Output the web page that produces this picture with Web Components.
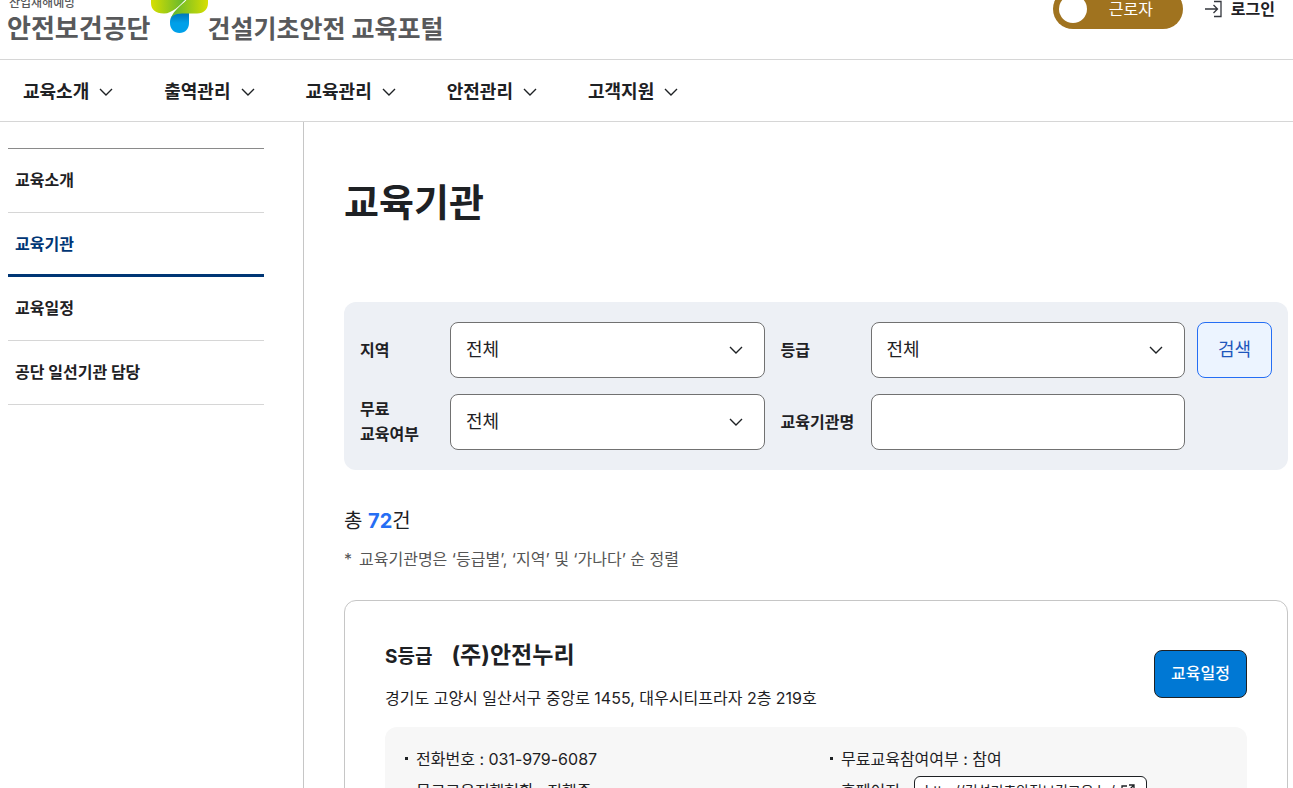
<!DOCTYPE html>
<html lang="ko">
<head>
<meta charset="UTF-8">
<title>교육기관 | 건설기초안전 교육포털</title>
<style>
    body {
        margin: 0;
        height: 100vh;
        overflow: hidden;
        background: #fff;
        color: #1e2124;
        font-family: Inter, "Noto Sans CJK KR", sans-serif;
        font-size: 16px;
        line-height: 24px;
    }
</style>
</head>
<body>
<portal-app></portal-app>

<script>
const chevron = `
    <svg class="chevron" width="16" height="16" viewBox="0 0 16 16" fill="none" stroke="currentColor" stroke-width="1.4" aria-hidden="true">
        <path d="M2 5l6 6 6-6"/>
    </svg>`;

class PortalHeader extends HTMLElement {
    constructor() {
        super();
        this.attachShadow({ mode: 'open' });
    }

    connectedCallback() {
        this.shadowRoot.innerHTML = `
            <style>
                :host { display: block; border-bottom: 1px solid #d6d6d6; }
                header {
                    display: flex;
                    justify-content: space-between;
                    align-items: flex-end;
                    height: 59px;
                    overflow: hidden;
                    padding: 0 18px 0 7px;
                }
                .brand { display: flex; align-items: flex-end; color: #58595b; text-decoration: none; font-weight: 700; }
                .agency, .title { padding-bottom: 12px; line-height: 36px; }
                .agency { font-size: 26px; }
                .agency small { display: block; padding-left: 2px; font-size: 12px; line-height: 16px; font-weight: 500; }
                .title { font-size: 25px; }
                .symbol { margin-bottom: 26px; }
                .util { display: flex; align-items: center; gap: 22px; padding-bottom: 30px; }
                .switch {
                    display: flex;
                    align-items: center;
                    width: 130px;
                    height: 40px;
                    padding: 0 8px 0 6px;
                    border: 0;
                    border-radius: 20px;
                    background: #a0731f;
                    color: #fff;
                    font: inherit;
                }
                .switch i { width: 28px; height: 28px; border-radius: 50%; background: #fff; }
                .switch span { flex: 1; text-align: center; }
                .login { display: flex; align-items: center; gap: 9px; color: inherit; text-decoration: none; font-weight: 700; }
            </style>
            <header>
                <a class="brand" href="#">
                    <span class="agency"><small>산업재해예방</small>안전보건공단</span>
                    <svg class="symbol" width="57" height="66" viewBox="0 0 57 66" aria-hidden="true">
                        <defs>
                            <linearGradient id="l"><stop offset="0" stop-color="#d7df00"/><stop offset="1" stop-color="#5cb531"/></linearGradient>
                            <linearGradient id="r"><stop offset="0" stop-color="#5cb531"/><stop offset="1" stop-color="#d7df00"/></linearGradient>
                            <linearGradient id="b" x2="0" y2="1"><stop offset="0" stop-color="#0075b8"/><stop offset=".5" stop-color="#00a0e9"/></linearGradient>
                        </defs>
                        <path fill="url(#l)" d="M10 22h25v10C30 37 22 46.500 13 46.500C4 46.500 0 42 0 36V32C0 26 4 22 10 22z"/>
                        <path fill="url(#b)" d="M19 55C19 49 23 46 29 46H38V56C38 62 34 66 28.500 66C23 66 19 62 19 56z"/>
                        <path fill="url(#r)" d="M37 31C33 37 23 42 20 51C23 47 27 46.500 33 46.500H46C53 46.500 57 42 57 36V32C57 26 53 22 47 22H37z"/>
                    </svg>
                    <span class="title">건설기초안전 교육포털</span>
                </a>
                <div class="util">
                    <button class="switch" type="button" role="switch" aria-checked="false"><i></i><span>근로자</span></button>
                    <a class="login" href="#">
                        <svg width="17" height="18" viewBox="0 0 17 18" fill="none" stroke="#33363d" stroke-width="1.300" aria-hidden="true">
                            <path d="M0 9h12M8.500 5l4 4-4 4M9 1.500h7v15H9"/>
                        </svg>로그인</a>
                </div>
            </header>
        `;
    }
}

class PortalNav extends HTMLElement {
    constructor() {
        super();
        this.attachShadow({ mode: 'open' });
    }

    connectedCallback() {
        const items = this.getAttribute('items').split(',');

        this.shadowRoot.innerHTML = `
            <style>
                :host { display: block; border-bottom: 1px solid #d6d6d6; }
                nav { display: flex; gap: 50px; padding: 0 23px; }
                button {
                    display: flex;
                    align-items: center;
                    gap: 9px;
                    height: 61px;
                    padding: 3px 0 0;
                    border: 0;
                    background: none;
                    color: inherit;
                    font: inherit;
                    font-size: 18px;
                    font-weight: 700;
                }
            </style>
            <nav>${items.map(item => `<button type="button">${item}${chevron}</button>`).join('')}</nav>
        `;
    }
}

class SideMenu extends HTMLElement {
    constructor() {
        super();
        this.attachShadow({ mode: 'open' });
    }

    connectedCallback() {
        const items = this.getAttribute('items').split(',');
        const current = this.getAttribute('current');

        this.shadowRoot.innerHTML = `
            <style>
                :host { display: block; padding: 26px 39px 0 8px; border-right: 1px solid #c6c6c6; }
                ul { margin: 0; padding: 0; list-style: none; border-top: 1px solid #8a8a8a; }
                a {
                    display: block;
                    box-sizing: border-box;
                    height: 64px;
                    padding: 19px 7px 0;
                    border-bottom: 1px solid #d6d6d6;
                    color: inherit;
                    font-weight: 700;
                    text-decoration: none;
                }
                a[aria-current] { border-bottom: 3px solid #003675; color: #003675; }
            </style>
            <ul>
                ${items.map(item => `<li><a href="#" ${item === current ? 'aria-current="page"' : ''}>${item}</a></li>`).join('')}
            </ul>
        `;
    }
}

class SearchField extends HTMLElement {
    constructor() {
        super();
        this.attachShadow({ mode: 'open' });
    }

    connectedCallback() {
        const label = this.getAttribute('label');
        const option = this.getAttribute('option');

        this.shadowRoot.innerHTML = `
            <style>
                :host { display: contents; }
                label { align-self: center; font-weight: 700; line-height: 25px; word-break: keep-all; }
                .box { display: grid; align-items: center; min-width: 0; }
                .box > * { grid-area: 1 / 1; }
                select, input {
                    appearance: none;
                    box-sizing: border-box;
                    width: 100%;
                    height: 56px;
                    margin: 0;
                    padding: 0 15px;
                    border: 1px solid #717171;
                    border-radius: 8px;
                    background: #fff;
                    color: inherit;
                    font: inherit;
                    font-size: 18px;
                }
                .chevron { justify-self: end; margin-right: 21px; pointer-events: none; }
            </style>
            <label for="field">${label}</label>
            <div class="box">
                ${option ? `<select id="field"><option>${option}</option></select>${chevron}` : '<input id="field" type="text">'}
            </div>
        `;
    }
}

class SearchPanel extends HTMLElement {
    constructor() {
        super();
        this.attachShadow({ mode: 'open' });
    }

    connectedCallback() {
        this.shadowRoot.innerHTML = `
            <style>
                :host { display: block; }
                form {
                    display: flex;
                    align-items: flex-start;
                    gap: 12px;
                    padding: 20px 16px;
                    border-radius: 12px;
                    background: #edf0f5;
                }
                .fields { flex: 1; display: grid; grid-template-columns: 74px 1fr 74px 1fr; gap: 16px; }
                button {
                    width: 75px;
                    height: 56px;
                    border: 1px solid #256ef4;
                    border-radius: 8px;
                    background: #ecf4ff;
                    color: #1d56bc;
                    font: inherit;
                    font-size: 18px;
                }
            </style>
            <form>
                <div class="fields"><slot></slot></div>
                <button type="button">검색</button>
            </form>
        `;
    }
}

class AgencyCard extends HTMLElement {
    constructor() {
        super();
        this.attachShadow({ mode: 'open' });
    }

    connectedCallback() {
        this.shadowRoot.innerHTML = `
            <style>
                :host { display: block; padding: 36px 40px; border: 1px solid #c6c6c6; border-radius: 12px; }
                .head { display: flex; justify-content: space-between; align-items: center; }
                h2 { display: flex; align-items: baseline; gap: 19px; margin: 0 0 11px; font-size: 23px; line-height: 36px; }
                h2 small { font-size: 19px; }
                p { margin: 0; }
                button {
                    height: 48px;
                    padding: 0 16px 2px;
                    border: 1px solid #1e2124;
                    border-radius: 8px;
                    background: #0078d4;
                    color: #fff;
                    font: inherit;
                    font-weight: 500;
                }
                .info { margin-top: 17px; padding: 16px 20px; border-radius: 12px; background: #f7f7f7; }
            </style>
            <div class="head">
                <div>
                    <h2><small>${this.getAttribute('grade')}</small>${this.getAttribute('name')}</h2>
                    <p>${this.getAttribute('address')}</p>
                </div>
                <button type="button">교육일정</button>
            </div>
            <div class="info"><slot></slot></div>
        `;
    }
}

class AgencyInfo extends HTMLElement {
    constructor() {
        super();
        this.attachShadow({ mode: 'open' });
    }

    connectedCallback() {
        this.shadowRoot.innerHTML = `
            <style>
                :host { display: block; }
                ul {
                    display: grid;
                    grid-template-columns: 1fr 1fr;
                    column-gap: 28px;
                    margin: 0;
                    padding: 0;
                    list-style: none;
                    line-height: 32px;
                }
                li { display: flex; align-items: flex-start; white-space: pre; }
                li::before { content: ""; width: 3px; height: 3px; margin: 14px 8px 0 0; background: currentColor; }
                a {
                    display: flex;
                    align-items: center;
                    gap: 6px;
                    height: 28px;
                    margin: 1px 0 0 5px;
                    padding: 0 11px 0 10px;
                    border: 1px solid #1e2124;
                    border-radius: 6px;
                    background: #fff;
                    color: inherit;
                    font-size: 14px;
                    text-decoration: none;
                }
            </style>
            <ul>
                <li>전화번호 : 031-979-6087</li>
                <li>무료교육참여여부 : 참여</li>
                <li>무료교육진행현황 : 진행중</li>
                <li>홈페이지 :<a href="#">http://건설기초안전보건교육.kr/<svg width="14" height="14" viewBox="0 0 14 14" fill="none" stroke="currentColor" stroke-width="1.300" aria-hidden="true"><path d="M6 2H1v11h11V8M8 1h5v5M13 1L6 8"/></svg></a></li>
            </ul>
        `;
    }
}

class PortalApp extends HTMLElement {
    constructor() {
        super();
        this.attachShadow({ mode: 'open' });
    }

    connectedCallback() {
        this.shadowRoot.innerHTML = `
            <style>
                :host { display: flex; flex-direction: column; min-height: 100%; }
                .layout { flex: 1; display: grid; grid-template-columns: 304px 1fr; }
                main { min-width: 0; padding: 52px 5px 40px 40px; }
                h1 { margin: 0 0 72px; font-size: 38px; line-height: 56px; }
                .count { margin: 36px 0 11px; font-size: 20px; line-height: 30px; }
                .count strong { color: #256ef4; }
                .note { display: flex; gap: 7px; margin: 0 0 29px; color: #555; }
            </style>
            <portal-header></portal-header>
            <portal-nav items="교육소개,출역관리,교육관리,안전관리,고객지원"></portal-nav>
            <div class="layout">
                <side-menu items="교육소개,교육기관,교육일정,공단 일선기관 담당" current="교육기관"></side-menu>
                <main>
                    <h1>교육기관</h1>
                    <search-panel>
                        <search-field label="지역" option="전체"></search-field>
                        <search-field label="등급" option="전체"></search-field>
                        <search-field label="무료 교육여부" option="전체"></search-field>
                        <search-field label="교육기관명"></search-field>
                    </search-panel>
                    <p class="count">총 <strong>72</strong>건</p>
                    <p class="note"><span>*</span>교육기관명은 ‘등급별’, ‘지역’ 및 ‘가나다’ 순 정렬</p>
                    <agency-card grade="S등급" name="(주)안전누리" address="경기도 고양시 일산서구 중앙로 1455, 대우시티프라자 2층 219호">
                        <agency-info></agency-info>
                    </agency-card>
                </main>
            </div>
        `;
    }
}

customElements.define('portal-header', PortalHeader);
customElements.define('portal-nav', PortalNav);
customElements.define('side-menu', SideMenu);
customElements.define('search-field', SearchField);
customElements.define('search-panel', SearchPanel);
customElements.define('agency-info', AgencyInfo);
customElements.define('agency-card', AgencyCard);
customElements.define('portal-app', PortalApp);
</script>
</body>
</html>
